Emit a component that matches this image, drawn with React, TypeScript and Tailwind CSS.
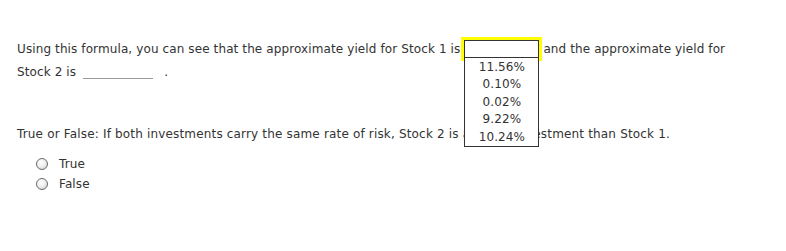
import React from "react";

function Radio({ label }: { label: string }) {
  return (
    <div className="flex items-center h-[20px]">
      <span className="inline-block w-[12px] h-[12px] rounded-full border border-[#6b6b6b] bg-[radial-gradient(circle_at_40%_35%,#ffffff_0%,#f0f0f0_45%,#c8c8c8_100%)]" />
      <span className="ml-[11px]">{label}</span>
    </div>
  );
}

export default function App() {
  const items = ["11.56%", "0.10%", "0.02%", "9.22%", "10.24%"];
  return (
    <div className="w-[786px] h-[251px] bg-white font-['Verdana','DejaVu_Sans',sans-serif] text-[12px] tracking-[0.11px] text-[#333] pt-[38px] pl-[17px]">
      <p className="leading-[22px]">
        Using this formula, you can see that the approximate yield for Stock 1 is
        <span className="relative inline-block align-middle ml-[1px] border-[3px] border-[#ffff00] -mt-[2px]">
          <span className="block w-[75px] h-[18px] border border-[#333] bg-white" />
          <span className="absolute left-0 top-full w-[75px] h-[89px] border border-t-0 border-[#333] bg-white flex flex-col items-center pt-[1px] z-10">
            {items.map((it) => (
              <span key={it} className="h-[17.5px] leading-[17.5px] text-[#333]">
                {it}
              </span>
            ))}
          </span>
        </span>
        <span className="ml-[1px]">and the approximate yield for</span>
        <br />
        Stock 2 is
        <span className="inline-block w-[70px] h-[1px] bg-[#9a9a9a] ml-[7px] align-[-3px]" />
        <span className="ml-[11px]">.</span>
      </p>
      <p className="mt-[40px] leading-[22px] tracking-[0.17px]">
        True or False: If both investments carry the same rate of risk, Stock 2 is a worse investment than Stock 1.
      </p>
      <div className="mt-[9px] pl-[19px]">
        <Radio label="True" />
        <Radio label="False" />
      </div>
    </div>
  );
}
